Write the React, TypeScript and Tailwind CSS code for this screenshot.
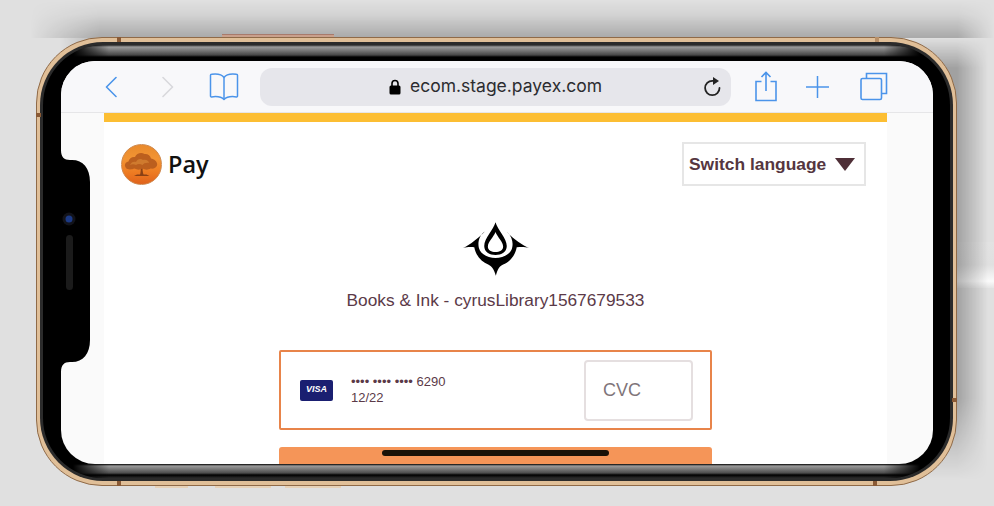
import React from 'react';

const BLUE = '#4b94ea';

const BackChevron = ({ color }: { color: string }) => (
  <svg width="12" height="22" viewBox="0 0 12 22" fill="none" stroke={color} strokeWidth="1.6" strokeLinecap="round" strokeLinejoin="round">
    <path d="M11 1.500L1.500 11 11 20.500" />
  </svg>
);

const ForwardChevron = ({ color }: { color: string }) => (
  <svg width="12" height="22" viewBox="0 0 12 22" fill="none" stroke={color} strokeWidth="1.6" strokeLinecap="round" strokeLinejoin="round">
    <path d="M1 1.500L10.500 11 1 20.500" />
  </svg>
);

const BookIcon = () => (
  <svg width="30" height="29" viewBox="0 0 30 29" fill="none" stroke={BLUE} strokeWidth="1.5" strokeLinejoin="round">
    <path d="M15 5.500C13 2.500 8 1.500 2.500 2.200c-.6 0-1 .5-1 1V24c0 .6.5 1 1 .9 5-.7 10 0 12.500 2.600 2.500-2.600 7.500-3.300 12.500-2.600.5.100 1-.3 1-.9V3.200c0-.5-.4-1-1-1C22 1.500 17 2.500 15 5.500z" />
    <path d="M15 5.500V27.500" />
  </svg>
);

const ShareIcon = () => (
  <svg width="24" height="31" viewBox="0 0 24 31" fill="none" stroke={BLUE} strokeWidth="1.6">
    <path d="M7.500 10.500H2v19h20v-19h-5.500" />
    <path d="M12 20V1.500M7.500 6L12 1.500 16.500 6" />
  </svg>
);

const PlusIcon = () => (
  <svg width="23" height="22" viewBox="0 0 23 22" fill="none" stroke={BLUE} strokeWidth="1.5">
    <path d="M0 11H23M11.500 0V22" />
  </svg>
);

const TabsIcon = () => (
  <svg width="28" height="29" viewBox="0 0 28 29" fill="none" stroke={BLUE} strokeWidth="1.6">
    <path d="M6.500 6V1.500h20v20H21.500" />
    <rect x="1" y="6.500" width="20.500" height="21" rx="1.500" />
  </svg>
);

const LockIcon = () => (
  <svg width="12" height="16" viewBox="0 0 12 16">
    <path d="M3 7V4.500a3 3 0 0 1 6 0V7" fill="none" stroke="#000" strokeWidth="1.600" />
    <rect x="0.500" y="6.500" width="11" height="9" rx="1.500" fill="#000" />
  </svg>
);

const ReloadIcon = () => (
  <svg width="19" height="20" viewBox="0 0 19 20" fill="none">
    <path d="M16.500 11a7.200 7.200 0 1 1-7.200-7.200h2.500" stroke="#222" strokeWidth="1.800" strokeLinecap="round" />
    <path d="M10 0l6 4-6 4z" fill="#222" />
  </svg>
);

const TreeLogo = () => (
  <div className="w-[41px] h-[41px] rounded-full border border-[#cf8a50] bg-[linear-gradient(to_bottom,#e98a2c_0%,#f29433_35%,#ee7c22_70%,#e0621c_100%)] flex items-center justify-center shrink-0">
    <svg width="35" height="27" viewBox="0 0 35 27">
      <path d="M16 24c.8-3 1-6 .4-9h2.400c-.5 3-.2 6 .8 9z" fill="#8a4115" />
      <path d="M2 17c-2.500-3-.5-6 2.500-6.500C5 7.500 8 5.500 11 6c1.500-3.500 6-5 9.500-3 3-.5 6 1.500 6.500 4.500 3.500.5 7 3.500 6 7-.8 2.500-3.500 3.500-6.500 3-2 1.500-5.500 1.500-8 0-2.500 1.500-5.500 1.500-8 0-2.500 1-7 1.500-8.500-.5z" fill="#bb5f1e" />
      <path d="M6 14c1-3 4-4 6-3 1-3 5-4 7-2 3-1 6 1 6 3-3-.5-5 .5-6.500 2-2-1.500-5-1.500-6.500 0-2-1-4-1-6 0z" fill="#cf7a2e" />
      <path d="M10 25h15.500l-3-1.500h-9.500z" fill="#8a4115" />
    </svg>
  </div>
);

const InkLogo = () => (
  <svg width="66" height="54" viewBox="14 10 199 162" fillRule="evenodd" fill="#000">
    {/* drop */}
    <path d="M112 10C118 32 146 58 146 82 146 100 130 109 112 109 94 109 78 100 78 82 78 58 106 32 112 10ZM112 40C106 56 89 70 89 84 89 95 100 100 112 100 124 100 135 95 135 84 135 70 118 56 112 40Z" />
    {/* wings and base */}
    <path d="M80 38C65 48 57 68 62 88 66 106 90 118 112 118 134 118 158 106 162 88 167 68 159 48 144 38 164 58 189 78 213 88 200 84 190 84 176 86 172 110 155 130 135 138 124 143 118 152 113 172 108 152 100 143 90 138 70 130 52 110 48 86 38 84 28 84 14 88 35 78 60 58 80 38Z" />
  </svg>
);

const VisaBadge = () => (
  <div className="w-[33px] h-[21px] rounded-[2px] bg-[#1a1f71] flex items-center justify-center text-white text-[9px] font-bold italic">
    VISA
  </div>
);

// black cut-out on the left of the screen, with camera and speaker
const Notch = () => (
  <svg className="absolute left-0 top-[89px]" width="29" height="222" viewBox="0 0 29 222">
    <path d="M0 0C0 7 3 10 9 10H11C22 10 29 18 29 32V190C29 204 22 212 11 212H9C3 212 0 215 0 222Z" fill="#000" />
    <circle cx="8" cy="69" r="6.500" fill="#12131a" />
    <circle cx="8" cy="69" r="3.500" fill="#1c3a86" />
    <rect x="5" y="85" width="7" height="55" rx="3.500" fill="#1b1b1b" />
  </svg>
);

export default function App() {
  return (
    <div className="relative w-[994px] h-[506px] overflow-hidden bg-[#e0e0e0] pt-[37px] pl-[36px] font-['Liberation_Sans',sans-serif]">
      {/* Cable on the right of the phone */}
      <div className="absolute left-[950px] top-[242px] w-[44px] h-[46px] bg-[linear-gradient(to_bottom,#e2e2e2_0%,#e0e0e0_50%,#fafafa_85%,#e4e4e4_100%)]" />
      {/* Soft shadow thrown up and to the right */}
      <div className="absolute left-[30px] top-0 w-[964px] h-[38px] bg-[linear-gradient(to_bottom,rgba(0,0,0,0)_0px,rgba(0,0,0,0.05)_14px,rgba(0,0,0,0.24)_37px)] [mask-image:linear-gradient(to_right,transparent,black_70px,black_calc(100%-36px),transparent)]" />
      <div className="absolute left-[20px] top-[38px] w-[90px] h-[70px] bg-[linear-gradient(to_bottom,rgba(0,0,0,0.2),rgba(0,0,0,0))] [mask-image:linear-gradient(to_right,transparent_40px,black_80px)]" />
      <div className="absolute left-[890px] top-[38px] w-[104px] h-[442px] bg-[linear-gradient(to_right,rgba(0,0,0,0.28)_67px,rgba(0,0,0,0)_98px)] [mask-image:linear-gradient(to_bottom,transparent,black_30px,black_360px,transparent)]" />

      {/* Phone frame */}
      <div className="relative w-[921px] h-[449px] rounded-[66px] px-[3px] py-[4px] bg-[#e0bf98] border border-[#8f6a48]">
        {/* Buttons and seams on the frame edge */}
        <div className="absolute top-[-4px] left-[185px] w-[112px] h-[3px] bg-[#c9a08c] border-t border-[#a87a6c]" />
        <div className="absolute bottom-[-3px] left-[118px] w-[33px] h-[2px] bg-[#e7d2b8]" />
        <div className="absolute bottom-[-3px] left-[178px] w-[56px] h-[2px] bg-[#e7d2b8]" />
        <div className="absolute bottom-[-3px] left-[248px] w-[56px] h-[2px] bg-[#e7d2b8]" />
        <div className="absolute top-[-1px] left-[80px] w-[4px] h-[5px] bg-[#8a5a35]" />
        <div className="absolute top-[-1px] left-[838px] w-[4px] h-[5px] bg-[#b99068]" />
        <div className="absolute bottom-[-1px] left-[80px] w-[4px] h-[5px] bg-[#8a5a35]" />
        <div className="absolute bottom-[-1px] left-[836px] w-[4px] h-[5px] bg-[#8a5a35]" />
        <div className="absolute top-[75px] left-[-1px] w-[5px] h-[4px] bg-[#8a5a35]" />
        <div className="absolute top-[360px] right-[-1px] w-[5px] h-[4px] bg-[#8a5a35]" />

        <div className="w-full h-full rounded-[63px] bg-[#2b2b2b] p-[3px]">
          <div className="w-full h-full rounded-[60px] bg-black flex flex-col overflow-hidden">
            <div className="h-[16px] shrink-0 mx-[30px] bg-[linear-gradient(to_bottom,#2b2b2b_0,#9c9c9c_2px,#474747_10px,#000_12px)] [mask-image:linear-gradient(to_right,transparent,black_36px,black_calc(100%-36px),transparent)]" />

            <div className="relative flex-1 min-h-0 ml-[18px] mr-[17px] rounded-[34px] overflow-hidden bg-[#fafafa] flex flex-col">
              {/* Safari toolbar */}
              <div className="h-[52px] shrink-0 flex items-center border-b border-[#e6e6e8] bg-[#f8f8fa]">
                <div className="ml-[44px] flex">
                  <BackChevron color={BLUE} />
                </div>
                <div className="ml-[45px] flex">
                  <ForwardChevron color="#d8d8dc" />
                </div>
                <div className="ml-[35px] flex">
                  <BookIcon />
                </div>
                <div className="ml-[21px] w-[471px] h-[38px] rounded-[12px] bg-[#e6e6eb] flex items-center">
                  <div className="w-[28px] shrink-0" />
                  <div className="flex-1 flex items-center justify-center gap-[9px]">
                    <LockIcon />
                    <span className="text-[17.500px] text-[#2c2c30] font-['Inter',sans-serif]">ecom.stage.payex.com</span>
                  </div>
                  <div className="w-[28px] shrink-0 flex">
                    <ReloadIcon />
                  </div>
                </div>
                <div className="ml-[23px] flex">
                  <ShareIcon />
                </div>
                <div className="ml-[28px] flex">
                  <PlusIcon />
                </div>
                <div className="ml-[31px] flex">
                  <TabsIcon />
                </div>
              </div>

              {/* Page */}
              <div className="flex-1 min-h-0 ml-[43px] mr-[46px] bg-white flex flex-col overflow-hidden">
                <div className="h-[9px] shrink-0 bg-[#fcbe33]" />
                <div className="flex justify-between items-start pt-[20px] pl-[17px] pr-[21px] h-[64px] shrink-0">
                  <div className="flex items-center gap-[6px] mt-[2px]">
                    <TreeLogo />
                    <span className="text-[23.500px] font-semibold text-[#111] font-['Open_Sans',sans-serif] leading-none">Pay</span>
                  </div>
                  <div className="w-[184px] h-[44px] border-2 border-[#e6e6e6] flex items-center pl-[5px] gap-[9px]">
                    <span className="text-[17.400px] font-bold text-[#553640] whitespace-nowrap">Switch language</span>
                    <div className="w-0 h-0 border-l-[10px] border-r-[10px] border-t-[13px] border-l-transparent border-r-transparent border-t-[#4f2f37]" />
                  </div>
                </div>

                <div className="flex flex-col items-center pt-[36px] shrink-0">
                  <InkLogo />
                  <div className="mt-[14px] text-[17.300px] text-[#5b3a48] leading-[20px]">Books &amp; Ink - cyrusLibrary1567679533</div>
                </div>

                <div className="mt-[40px] mx-[175px] h-[80px] shrink-0 border-2 border-[#e8844a] rounded-[2px] flex items-center pl-[19px] pr-[17px]">
                  <VisaBadge />
                  <div className="ml-[18px] text-[13px] leading-[16px] text-[#5b3a48] flex-1">
                    <div>•••• •••• •••• 6290</div>
                    <div>12/22</div>
                  </div>
                  <div className="w-[109px] h-[61px] border-2 border-[#e5dfe0] rounded-[4px] flex items-center pl-[17px] text-[18px] text-[#80757a]">
                    CVC
                  </div>
                </div>

                <div className="mt-[17px] mx-[175px] h-[40px] shrink-0 bg-[#f59558] rounded-t-[3px]" />
              </div>

              <Notch />
              {/* Home indicator */}
              <div className="absolute left-[321px] bottom-[8px] w-[227px] h-[6px] rounded-full bg-[#1a1208]" />
            </div>

            <div className="h-[14px] shrink-0 mx-[30px] bg-[linear-gradient(to_bottom,#000_0,#9a9a9a_2px,#4d4d4d_9px,#000_11px,#2b2b2b_14px)] [mask-image:linear-gradient(to_right,transparent,black_36px,black_calc(100%-36px),transparent)]" />
          </div>
        </div>
      </div>
    </div>
  );
}
